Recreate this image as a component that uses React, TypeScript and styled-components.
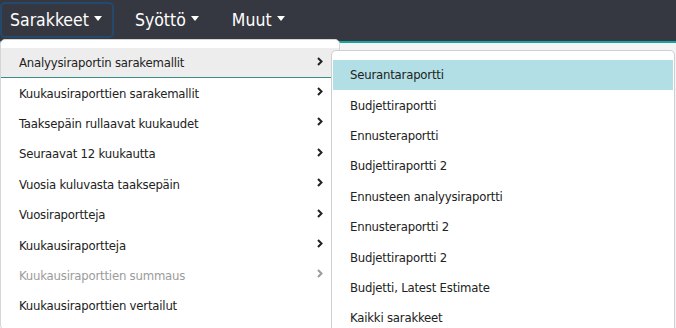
import React from 'react'
import styled, { createGlobalStyle } from 'styled-components'

const GlobalStyle = createGlobalStyle`
  html, body {
    margin: 0;
    padding: 0;
    background: #f3f4f5;
    font-family: Tahoma, "DejaVu Sans Condensed", "DejaVu Sans", sans-serif;
  }
  #root {
    min-height: 328px;
  }
`

const Page = styled.div`
  position: relative;
  width: 676px;
  height: 328px;
  overflow: hidden;
`

const NavBar = styled.nav`
  display: flex;
  align-items: center;
  gap: 11px;
  height: 41px;
  background: #353840;
  border-bottom: 2px solid #17a39e;
  box-sizing: content-box;
`

const NavItem = styled.div<{ focused?: boolean }>`
  position: relative;
  display: flex;
  align-items: center;
  height: 36px;
  padding: 0 10px 0 8px;
  margin-top: -2px;
  box-sizing: border-box;
  color: #ffffff;
  font-size: 17.5px;
  border: 2px solid ${(p) => (p.focused ? '#24496c' : 'transparent')};
  border-radius: 5px;
  cursor: pointer;
`

const Caret = styled.span`
  display: inline-block;
  margin-left: 5px;
  margin-top: -2px;
  border-top: 5px solid #ffffff;
  border-left: 4px solid transparent;
  border-right: 4px solid transparent;
`

const Dropdown = styled.div`
  position: absolute;
  top: 35px;
  left: -2px;
  width: 340px;
  padding: 8px 0;
  background: #ffffff;
  border: 1px solid #d6d6d6;
  border-radius: 5px;
  box-sizing: border-box;
  z-index: 10;
`

const SubMenu = styled.div`
  position: absolute;
  top: 2px;
  left: 330px;
  width: 344px;
  padding: 9px 1px;
  background: #ffffff;
  border: 1px solid #cfcfcf;
  border-radius: 5px;
  box-sizing: border-box;
  z-index: 11;
`

const MenuItem = styled.div<{ active?: boolean; disabled?: boolean }>`
  position: relative;
  display: flex;
  align-items: center;
  justify-content: space-between;
  height: 30.4px;
  padding: 0 16px 0 18px;
  font-size: 13px;
  letter-spacing: -0.2px;
  color: ${(p) => (p.disabled ? '#9b9b9b' : '#222222')};
  background: ${(p) => (p.active ? '#ededed' : 'transparent')};
  box-shadow: ${(p) => (p.active ? 'inset 0 -1px 0 #3b8a8c' : 'none')};
  white-space: nowrap;
`

const SubItem = styled.div<{ active?: boolean }>`
  display: flex;
  align-items: center;
  height: 30.4px;
  padding: 0 17px;
  font-size: 13px;
  letter-spacing: -0.2px;
  color: #222222;
  background: ${(p) => (p.active ? '#b1dfe5' : 'transparent')};
  white-space: nowrap;
`

const Chevron = ({ muted }: { muted?: boolean }) => (
  <svg width="6" height="9" viewBox="0 0 6 9" style={{ marginTop: -3 }}>
    <path d="M1 1 L4.5 4.5 L1 8" fill="none" stroke={muted ? '#9b9b9b' : '#222'} strokeWidth="2" />
  </svg>
)

const columns = [
  { label: 'Analyysiraportin sarakemallit', sub: true },
  { label: 'Kuukausiraporttien sarakemallit', sub: true },
  { label: 'Taaksepäin rullaavat kuukaudet', sub: true },
  { label: 'Seuraavat 12 kuukautta', sub: true },
  { label: 'Vuosia kuluvasta taaksepäin', sub: true },
  { label: 'Vuosiraportteja', sub: true },
  { label: 'Kuukausiraportteja', sub: true },
  { label: 'Kuukausiraporttien summaus', sub: true, disabled: true },
  { label: 'Kuukausiraporttien vertailut', sub: false },
]

const reports = [
  'Seurantaraportti',
  'Budjettiraportti',
  'Ennusteraportti',
  'Budjettiraportti 2',
  'Ennusteen analyysiraportti',
  'Ennusteraportti 2',
  'Budjettiraportti 2',
  'Budjetti, Latest Estimate',
  'Kaikki sarakkeet',
]

const App = () => (
  <Page>
    <GlobalStyle />
    <NavBar>
      <NavItem focused>
        Sarakkeet
        <Caret />
        <Dropdown>
          {columns.map((c, i) => (
            <MenuItem key={c.label} active={i === 0} disabled={c.disabled}>
              {c.label}
              {c.sub && <Chevron muted={c.disabled} />}
              {i === 0 && (
                <SubMenu>
                  {reports.map((r, j) => (
                    <SubItem key={j} active={j === 0}>
                      {r}
                    </SubItem>
                  ))}
                </SubMenu>
              )}
            </MenuItem>
          ))}
        </Dropdown>
      </NavItem>
      <NavItem>
        Syöttö
        <Caret />
      </NavItem>
      <NavItem>
        Muut
        <Caret />
      </NavItem>
    </NavBar>
  </Page>
)

export default App
